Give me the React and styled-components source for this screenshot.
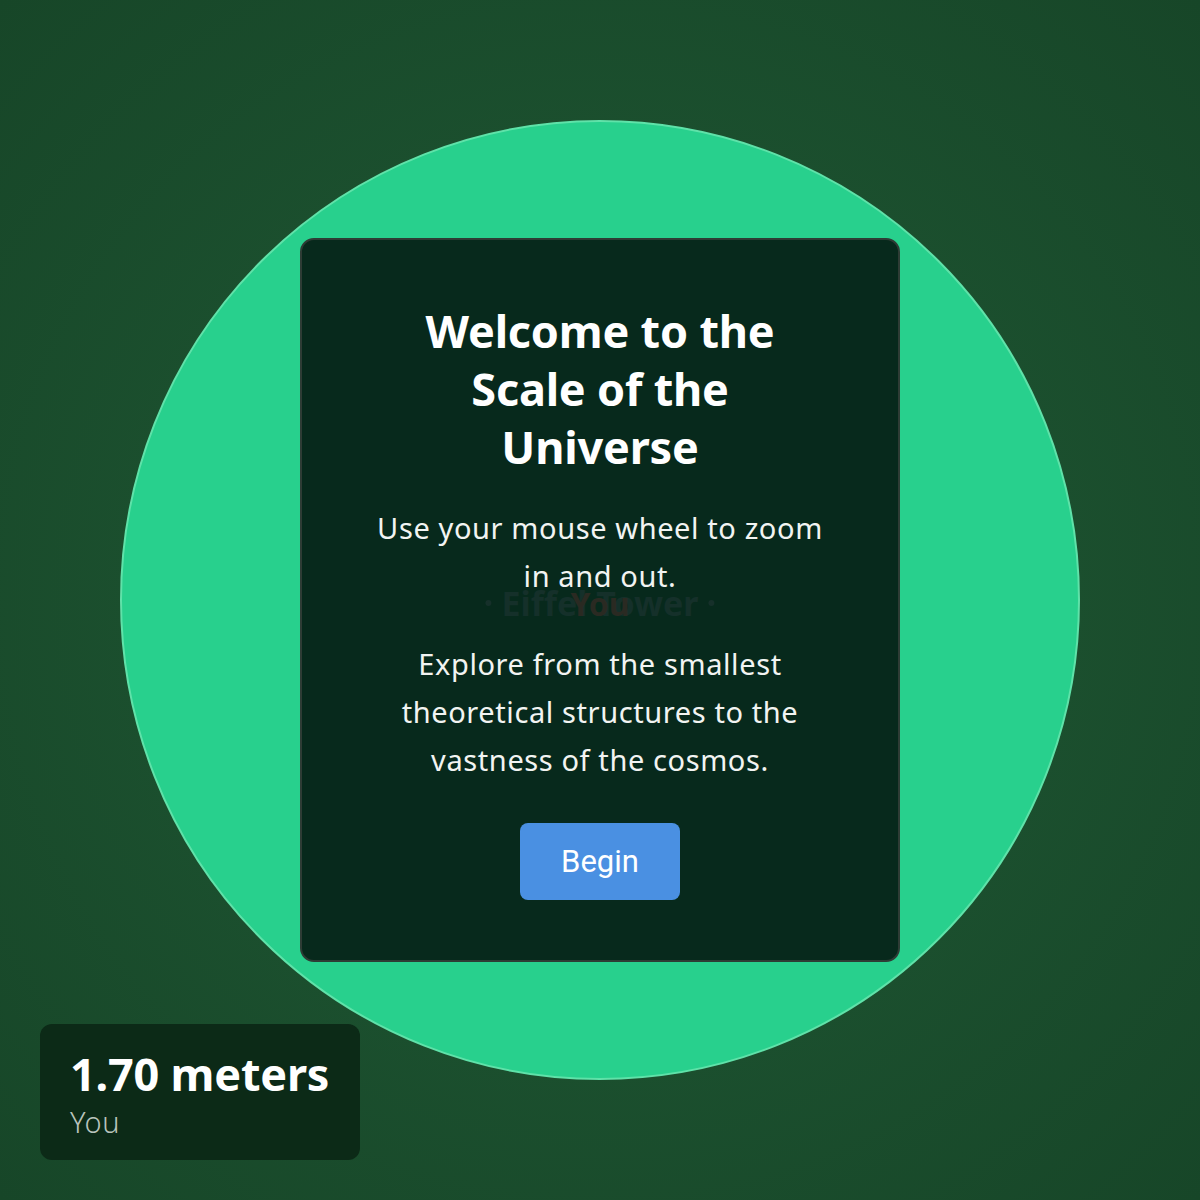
import React from 'react';
import styled, { createGlobalStyle } from 'styled-components';

const GlobalStyle = createGlobalStyle`
  html, body {
    margin: 0;
    padding: 0;
  }
  body {
    font-family: "Noto Sans", "Open Sans", sans-serif;
    background: #1a4c2c;
  }
`;

const Stage = styled.div`
  position: relative;
  width: 1200px;
  height: 1200px;
  overflow: hidden;
  display: flex;
  align-items: center;
  justify-content: center;
  background: radial-gradient(circle at 50% 50%, #1f5834 0%, #1b4f2e 55%, #174628 100%);
`;

const Scale = styled.div`
  position: relative;
  width: 960px;
  height: 960px;
  box-sizing: border-box;
  border-radius: 50%;
  background: #28d08d;
  border: 2px solid #5fe2a9;
  display: flex;
  align-items: center;
  justify-content: center;
`;

const Card = styled.div`
  position: relative;
  width: 600px;
  box-sizing: border-box;
  padding: 62px 70px 60px;
  background: #07291c;
  border: 2px solid #2e3c35;
  border-radius: 14px;
  display: flex;
  flex-direction: column;
  align-items: center;
  text-align: center;
  color: #fff;
`;

const Title = styled.h1`
  margin: 0 0 28px;
  font-size: 45px;
  line-height: 58px;
  font-weight: 700;
  letter-spacing: -0.2px;
`;

const Text = styled.p`
  margin: 0 0 ${(p) => p.gap || 0}px;
  font-size: 29px;
  line-height: 48px;
  font-weight: 400;
  letter-spacing: 0.6px;
  color: #f2f4f2;
`;

const BeginButton = styled.button`
  width: 160px;
  height: 77px;
  border: none;
  border-radius: 8px;
  background: #4a90e2;
  color: #fff;
  font-family: Roboto, "Noto Sans", sans-serif;
  font-size: 31px;
  cursor: pointer;
`;

const Ghost = styled.div`
  position: absolute;
  left: 50%;
  top: 603px;
  transform: translate(-50%, -50%);
  display: flex;
  align-items: center;
  gap: 10px;
  font-weight: 700;
  font-size: 34px;
  color: #15302a;
  white-space: nowrap;
  pointer-events: none;
  z-index: ${(p) => p.z || 1};
`;

const GhostMark = styled.span`
  width: 6px;
  height: 6px;
  border-radius: 50%;
  background: #16302a;
`;

const GhostYou = styled(Ghost)`
  color: #2a2a22;
  font-size: 32px;
`;

const InfoBox = styled.div`
  position: absolute;
  left: 40px;
  bottom: 40px;
  width: 320px;
  height: 136px;
  box-sizing: border-box;
  padding: 22px 30px 0;
  background: #0c2a17;
  border-radius: 12px;
  display: flex;
  flex-direction: column;
`;

const Size = styled.div`
  font-size: 45px;
  line-height: 56px;
  font-weight: 700;
  color: #fff;
  letter-spacing: -0.2px;
`;

const Label = styled.div`
  font-size: 29px;
  line-height: 40px;
  font-weight: 300;
  letter-spacing: 0.5px;
  color: #b9c3bc;
`;

export default function App() {
  return (
    <>
      <GlobalStyle />
      <Stage>
        <Scale>
          <Card>
            <Title>Welcome to the Scale of the Universe</Title>
            <Text gap={40}>Use your mouse wheel to zoom in and out.</Text>
            <Text gap={39}>
              Explore from the smallest theoretical structures to the vastness of the cosmos.
            </Text>
            <BeginButton>Begin</BeginButton>
          </Card>
        </Scale>
        <Ghost>
          <GhostMark />
          Eiffel Tower
          <GhostMark />
        </Ghost>
        <GhostYou z={2}>You</GhostYou>
        <InfoBox>
          <Size>1.70 meters</Size>
          <Label>You</Label>
        </InfoBox>
      </Stage>
    </>
  );
}
